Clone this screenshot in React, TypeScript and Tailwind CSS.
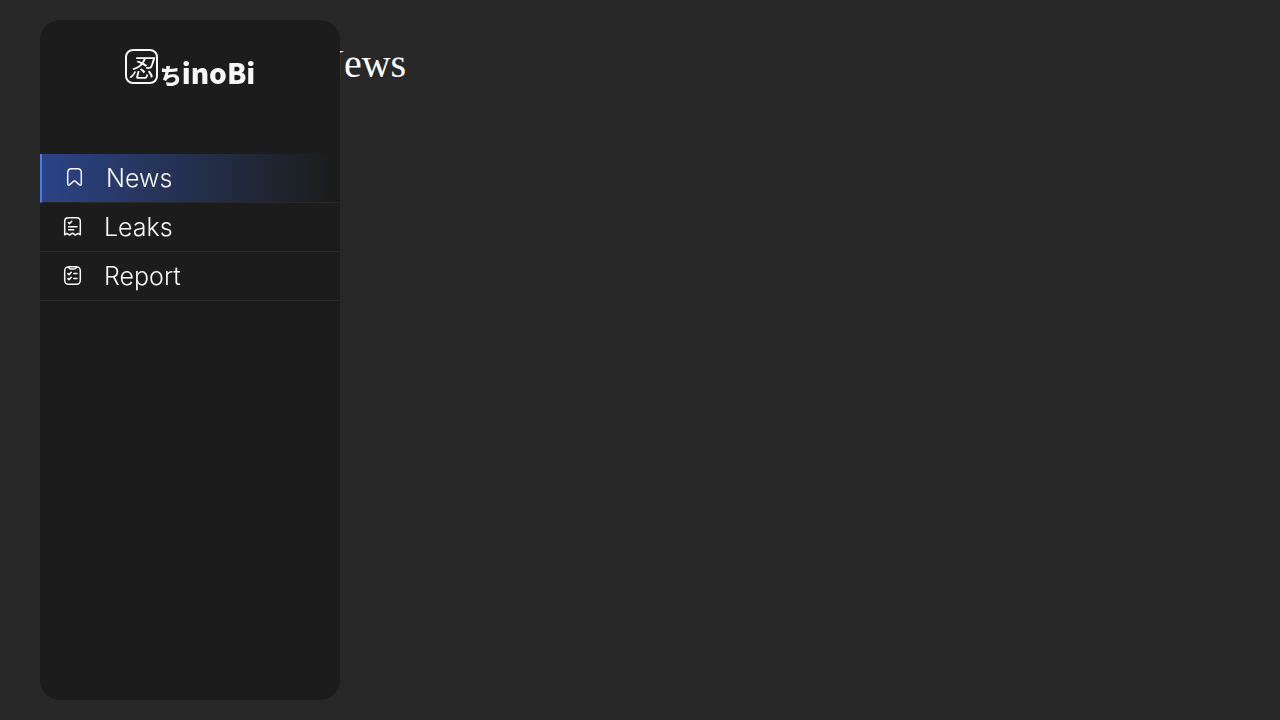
import type { ReactNode } from "react";

function IconFrame({ children }: { children: ReactNode }) {
  return (
    <svg
      viewBox="0 0 24 24"
      className="size-6 shrink-0"
      fill="none"
      stroke="currentColor"
      strokeWidth="1.5"
      strokeLinecap="round"
      strokeLinejoin="round"
      aria-hidden="true"
    >
      {children}
    </svg>
  );
}

function BookmarkIcon() {
  return (
    <IconFrame>
      <path d="M5.7 7.2C5.7 3.6 6.8 2.7 9.2 2.7H15.8C18.2 2.7 19.3 3.6 19.3 7.2V17.4C19.3 19.3 18.4 19.6 17.2 18.6L13.4 15.2Q12.5 14.5 11.6 15.2L7.8 18.6C6.6 19.6 5.7 19.3 5.7 17.4Z" />
    </IconFrame>
  );
}

function BillIcon() {
  return (
    <IconFrame>
      <path d="M4.7 6.4C4.7 3.5 5.6 2.7 8.4 2.7H16.6C19.4 2.7 20.3 3.5 20.3 6.4V19.8L18.2 18.4L15.4 20L12.5 18.2L9.6 20L6.8 18.4L4.7 19.8Z" />
      <path d="M8.4 7.6L9.5 8.8L11.8 6.2M8.6 11.7H17M8.6 14.8H13.8" />
    </IconFrame>
  );
}

function ClipboardIcon() {
  return (
    <IconFrame>
      <path d="M8.6 2.9C5.6 3 4.7 3.9 4.7 7V16C4.7 19.2 5.6 20.2 8.8 20.2H16.2C19.4 20.2 20.3 19.2 20.3 16V7C20.3 3.9 19.4 3 16.4 2.9" />
      <path d="M8.8 2.8H16.2C16.2 4.6 15.6 5.1 14 5.1H11C9.4 5.1 8.8 4.6 8.8 2.8Z" />
      <path d="M8 9.6L9 10.6L11.2 8.4M8 14.6L9 15.6L11.2 13.4M13.8 9.6H17M13.8 14.6H17" />
    </IconFrame>
  );
}

const items = [
  { label: "News", icon: <BookmarkIcon />, active: true },
  { label: "Leaks", icon: <BillIcon />, active: false },
  { label: "Report", icon: <ClipboardIcon />, active: false },
];

function Logo() {
  return (
    <a
      href="#"
      aria-label="Sinobi"
      className="flex h-10 items-end justify-center gap-0.5 font-['Noto_Sans_CJK_JP',sans-serif] text-[#f8f8f8]"
    >
      <span className="flex h-[35px] w-[33px] items-center justify-center rounded-lg border-2 border-[#f8f8f8] text-[25px] leading-none italic">
        忍
      </span>
      <span className="flex items-baseline font-black">
        <span className="text-[22px] leading-5">ち</span>
        <span className="text-[28px] leading-6">inoBi</span>
      </span>
    </a>
  );
}

export default function App() {
  return (
    <div className="min-h-screen bg-[#282828] text-white">
      <aside className="fixed inset-y-5 left-10 w-[300px] overflow-hidden rounded-[20px] bg-[#1c1c1c]">
        <div className="pt-6 pb-[70px]">
          <Logo />
        </div>
        <nav aria-label="Main">
          <ul>
            {items.map(({ label, icon, active }) => (
              <li key={label}>
                <a
                  href={`#${label.toLowerCase()}`}
                  aria-current={active ? "page" : undefined}
                  className={
                    "flex h-[49px] items-center gap-5 border-b border-b-[#282828] pl-5 font-['Inter',sans-serif] text-[25px] leading-8 font-light text-[#f8f8f8] " +
                    (active
                      ? "border-l-2 border-l-[#4c7df0] bg-linear-to-r from-[#2c4386] to-[#1c1c1c] to-98%"
                      : "")
                  }
                >
                  {icon}
                  <span>{label}</span>
                </a>
              </li>
            ))}
          </ul>
        </nav>
      </aside>
      <main className="pt-10 pl-[315px]">
        <h1 className="font-['Liberation_Serif',serif] text-[40px] leading-[48px]">News</h1>
      </main>
    </div>
  );
}
